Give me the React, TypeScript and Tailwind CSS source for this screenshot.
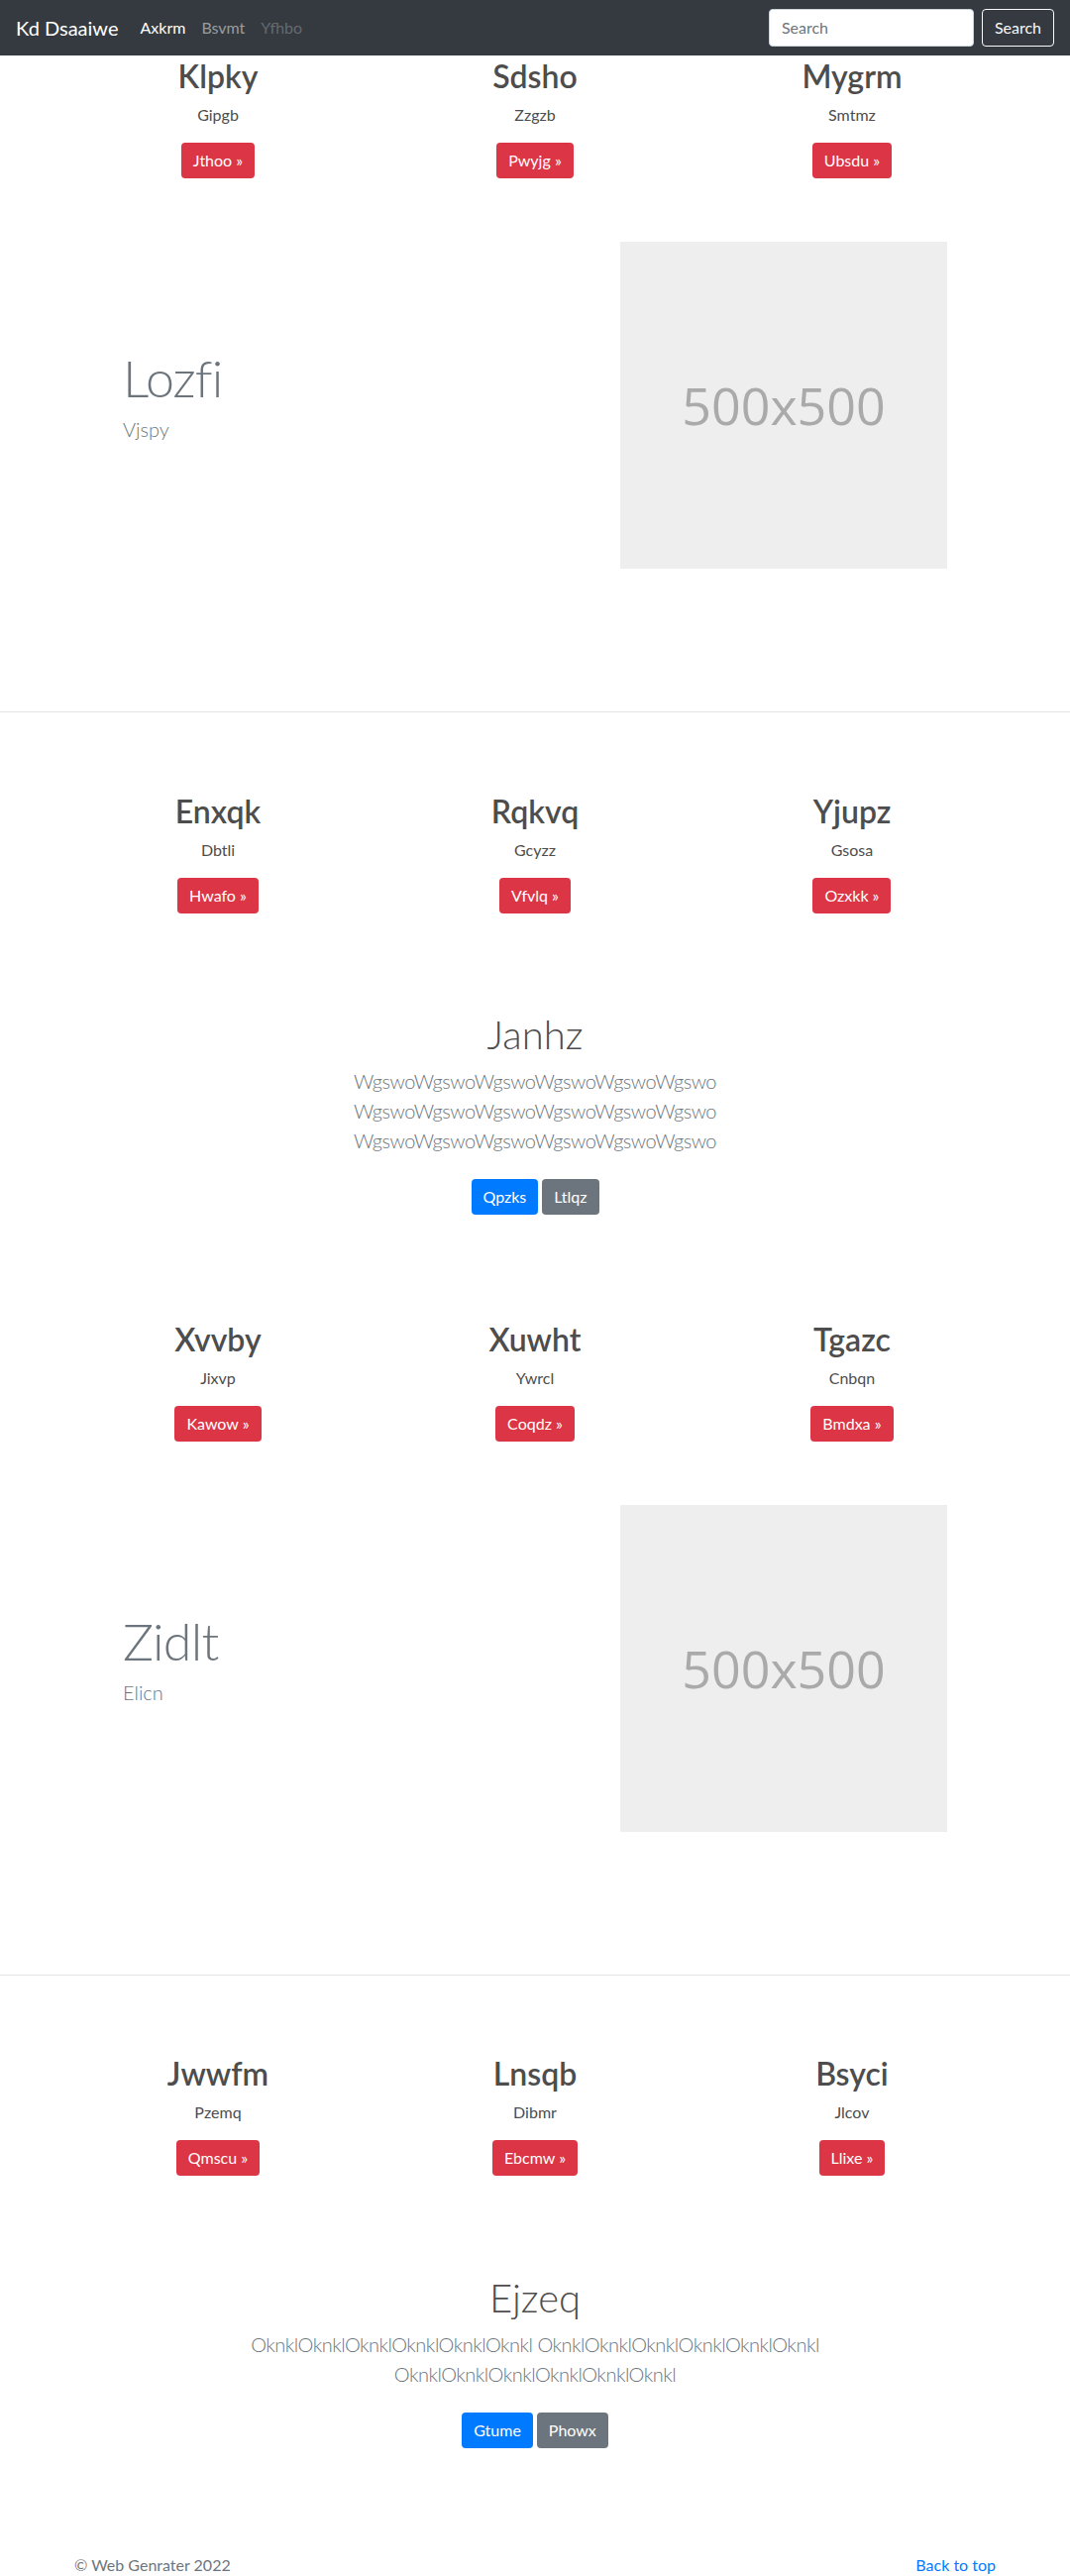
import React from "react";

type Item = { title: string; text: string; btn: string };

function Nav() {
  return (
    <nav className="h-14 bg-[#343a40] flex items-center px-4">
      <span className="text-xl leading-[30px] text-white mr-[14px]">Kd Dsaaiwe</span>
      <div className="flex items-center text-base">
        <a className="px-2 text-white">Axkrm</a>
        <a className="px-2 text-white/50">Bsvmt</a>
        <a className="px-2 text-white/25">Yfhbo</a>
      </div>
      <div className="ml-auto flex items-center">
        <div className="w-[207px] h-[38px] bg-white rounded border border-[#ced4da] flex items-center px-3 text-base text-[#6c757d] mr-2">
          Search
        </div>
        <button className="h-[38px] px-3 rounded border border-[#f8f9fa] text-[#f8f9fa] text-base leading-6">
          Search
        </button>
      </div>
    </nav>
  );
}

function Marketing({ items, className = "" }: { items: Item[]; className?: string }) {
  return (
    <div className={"w-[960px] mx-auto flex " + className}>
      {items.map((it) => (
        <div key={it.title} className="w-1/3 px-[15px] text-center">
          <h2 className="text-[32px] leading-[38px] font-semibold mb-2 text-[#4d4d4d]">{it.title}</h2>
          <p className="text-base leading-6 mb-4 text-[#4d4d4d]">{it.text}</p>
          <a className="inline-block bg-[#dc3545] text-white rounded px-3 py-1.5 text-base leading-6">
            {it.btn} »
          </a>
        </div>
      ))}
    </div>
  );
}

function Featurette({ title, text }: { title: string; text: string }) {
  return (
    <div className="flex items-center justify-between px-[124px] mt-16">
      <div>
        <h2 className="text-[52px] leading-none font-light tracking-[-0.8px] text-[#6c757d]">{title}</h2>
        <p className="mt-[11px] mb-4 text-xl leading-[30px] font-light text-[#6c757d]">{text}</p>
      </div>
      <div className="w-[330px] h-[330px] bg-[#eeeeee] flex items-center justify-center text-[#aaaaaa] text-[52px] font-['Open_Sans',sans-serif]">
        500x500
      </div>
    </div>
  );
}

function Divider() {
  return <div className="mt-[144px] h-px bg-[#e5e5e5]" />;
}

function Jumbo({
  title,
  text,
  b1,
  b2,
  className,
}: {
  title: string;
  text: string;
  b1: string;
  b2: string;
  className: string;
}) {
  return (
    <section className={"text-center " + className}>
      <h1 className="text-[40px] leading-[48px] font-light mb-2 text-[#4d4d4d]">{title}</h1>
      <p className="w-[610px] mx-auto text-xl leading-[30px] font-light tracking-[-0.5px] text-[#6c757d]">{text}</p>
      <div className="mt-6 flex justify-center gap-1">
        <a className="inline-block bg-[#007bff] text-white rounded px-3 py-1.5 text-base leading-6">{b1}</a>
        <a className="inline-block bg-[#6c757d] text-white rounded px-3 py-1.5 text-base leading-6">{b2}</a>
      </div>
    </section>
  );
}

export default function App() {
  const w = "WgswoWgswoWgswoWgswoWgswoWgswo";
  const o = "OknklOknklOknklOknklOknklOknkl";
  return (
    <div className="font-['Lato',sans-serif] text-[#212529] bg-white pb-12">
      <Nav />
      <Marketing
        className="mt-0.5"
        items={[
          { title: "Klpky", text: "Gipgb", btn: "Jthoo" },
          { title: "Sdsho", text: "Zzgzb", btn: "Pwyjg" },
          { title: "Mygrm", text: "Smtmz", btn: "Ubsdu" },
        ]}
      />
      <Featurette title="Lozfi" text="Vjspy" />
      <Divider />
      <Marketing
        className="mt-[81px]"
        items={[
          { title: "Enxqk", text: "Dbtli", btn: "Hwafo" },
          { title: "Rqkvq", text: "Gcyzz", btn: "Vfvlq" },
          { title: "Yjupz", text: "Gsosa", btn: "Ozxkk" },
        ]}
      />
      <Jumbo className="mt-[98px]" title="Janhz" text={`${w} ${w} ${w}`} b1="Qpzks" b2="Ltlqz" />
      <Marketing
        className="mt-[107px]"
        items={[
          { title: "Xvvby", text: "Jixvp", btn: "Kawow" },
          { title: "Xuwht", text: "Ywrcl", btn: "Coqdz" },
          { title: "Tgazc", text: "Cnbqn", btn: "Bmdxa" },
        ]}
      />
      <Featurette title="Zidlt" text="Elicn" />
      <Divider />
      <Marketing
        className="mt-20"
        items={[
          { title: "Jwwfm", text: "Pzemq", btn: "Qmscu" },
          { title: "Lnsqb", text: "Dibmr", btn: "Ebcmw" },
          { title: "Bsyci", text: "Jlcov", btn: "Llixe" },
        ]}
      />
      <Jumbo className="mt-[99px]" title="Ejzeq" text={`${o} ${o} ${o}`} b1="Gtume" b2="Phowx" />
      <footer className="w-[960px] mx-auto px-[15px] flex justify-between mt-[106px] text-base leading-6 text-[#6c757d]">
        <p>© Web Genrater 2022</p>
        <a className="text-[#007bff]">Back to top</a>
      </footer>
    </div>
  );
}
